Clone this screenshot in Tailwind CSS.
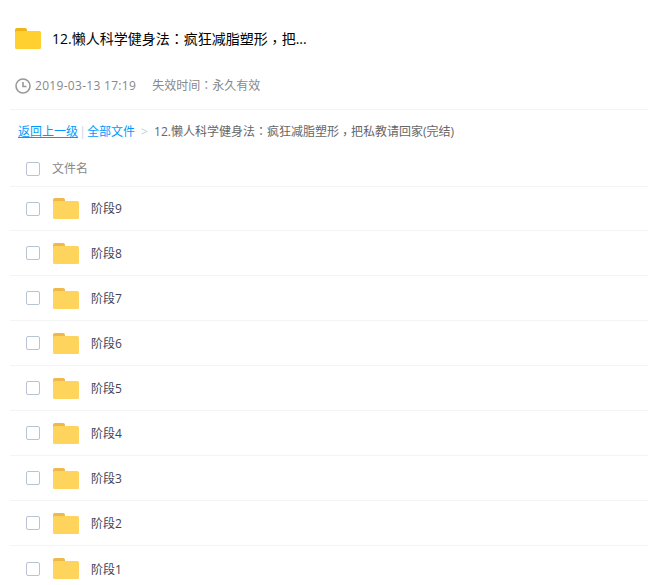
<!DOCTYPE html>
<html lang="zh">
<head>
<meta charset="UTF-8">
<script src="https://cdn.jsdelivr.net/npm/@tailwindcss/browser@4"></script>
<title>文件</title>
</head>
<body class="bg-white h-[585px] overflow-hidden font-['Open_Sans','Noto_Sans_CJK_SC',sans-serif]">
<div class="pl-[10px]">
  <div class="flex items-center h-[38px] mt-[19px] pl-[5px] gap-[11px]">
    <svg width="26" height="21" viewBox="0 0 26 21"><path d="M0 2a2 2 0 0 1 2-2h8a2 2 0 0 1 2 2v3H0z" fill="#f2b318"/><rect y="3" width="26" height="18" rx="1.5" fill="#ffd02f"/></svg>
    <span class="text-sm text-black">12.懒人科学健身法<span lang="zh-TW" class="font-['Noto_Sans_CJK_TC']">：</span>疯狂减脂塑形<span lang="zh-TW" class="relative top-[3px] font-['Noto_Sans_CJK_TC']">，</span>把...</span>
  </div>
  <div class="flex items-center h-[53px] pl-[5px] pt-[5px] text-xs text-[#888] border-b border-[#f3f4f6]">
    <svg width="16" height="16" viewBox="0 0 16 16" fill="none" stroke="#999" stroke-width="1.6"><circle cx="8" cy="8" r="7"/><path d="M8 4v4.5h3.5"/></svg>
    <span class="ml-1 tracking-[0.3px]">2019-03-13 17:19</span>
    <span class="ml-4">失效时间<span lang="zh-TW" class="font-['Noto_Sans_CJK_TC']">：</span>永久有效</span>
  </div>
  <div class="flex items-center h-10 pl-2 pt-[3px] text-xs text-[#666]">
    <span class="text-[#09f] underline">返回上一级</span>
    <span class="w-[9px] text-center text-[#c5d5e5]">|</span>
    <span class="text-[#09f]">全部文件</span>
    <span class="w-[19px] text-center text-[#c5d0e0]">&gt;</span>
    <span>12.懒人科学健身法<span lang="zh-TW" class="font-['Noto_Sans_CJK_TC']">：</span>疯狂减脂塑形<span lang="zh-TW" class="relative top-[3px] font-['Noto_Sans_CJK_TC']">，</span>把私教请回家(完结)</span>
  </div>
  <div class="flex items-center h-[37px] pl-4 pt-[1px] text-xs text-[#888] border-b border-[#f3f4f6]">
    <span class="w-[14px] h-[14px] border border-[#b8c4d4] rounded-[2px]"></span>
    <span class="ml-3 pt-[1px]">文件名</span>
  </div>
  <div id="rows">
    <div class="flex items-center h-[44px] pl-4 border-b border-[#f3f4f6]"><span class="w-[14px] h-[14px] border border-[#b8c4d4] rounded-[2px]"></span><svg class="ml-[13px]" width="26" height="21" viewBox="0 0 26 21"><path d="M0 2a2 2 0 0 1 2-2h8a2 2 0 0 1 2 2v3H0z" fill="#eeb84a"/><rect y="3" width="26" height="18" rx="1.5" fill="#ffd45c"/></svg><span class="ml-3 pt-[1px] text-xs text-[#445]">阶段9</span></div>
    <div class="flex items-center h-[45px] pl-4 border-b border-[#f3f4f6]"><span class="w-[14px] h-[14px] border border-[#b8c4d4] rounded-[2px]"></span><svg class="ml-[13px]" width="26" height="21" viewBox="0 0 26 21"><path d="M0 2a2 2 0 0 1 2-2h8a2 2 0 0 1 2 2v3H0z" fill="#eeb84a"/><rect y="3" width="26" height="18" rx="1.5" fill="#ffd45c"/></svg><span class="ml-3 pt-[2px] text-xs text-[#445]">阶段8</span></div>
    <div class="flex items-center h-[45px] pl-4 border-b border-[#f3f4f6]"><span class="w-[14px] h-[14px] border border-[#b8c4d4] rounded-[2px]"></span><svg class="ml-[13px]" width="26" height="21" viewBox="0 0 26 21"><path d="M0 2a2 2 0 0 1 2-2h8a2 2 0 0 1 2 2v3H0z" fill="#eeb84a"/><rect y="3" width="26" height="18" rx="1.5" fill="#ffd45c"/></svg><span class="ml-3 pt-[2px] text-xs text-[#445]">阶段7</span></div>
    <div class="flex items-center h-[45px] pl-4 border-b border-[#f3f4f6]"><span class="w-[14px] h-[14px] border border-[#b8c4d4] rounded-[2px]"></span><svg class="ml-[13px]" width="26" height="21" viewBox="0 0 26 21"><path d="M0 2a2 2 0 0 1 2-2h8a2 2 0 0 1 2 2v3H0z" fill="#eeb84a"/><rect y="3" width="26" height="18" rx="1.5" fill="#ffd45c"/></svg><span class="ml-3 pt-[2px] text-xs text-[#445]">阶段6</span></div>
    <div class="flex items-center h-[45px] pl-4 border-b border-[#f3f4f6]"><span class="w-[14px] h-[14px] border border-[#b8c4d4] rounded-[2px]"></span><svg class="ml-[13px]" width="26" height="21" viewBox="0 0 26 21"><path d="M0 2a2 2 0 0 1 2-2h8a2 2 0 0 1 2 2v3H0z" fill="#eeb84a"/><rect y="3" width="26" height="18" rx="1.5" fill="#ffd45c"/></svg><span class="ml-3 pt-[2px] text-xs text-[#445]">阶段5</span></div>
    <div class="flex items-center h-[45px] pl-4 border-b border-[#f3f4f6]"><span class="w-[14px] h-[14px] border border-[#b8c4d4] rounded-[2px]"></span><svg class="ml-[13px]" width="26" height="21" viewBox="0 0 26 21"><path d="M0 2a2 2 0 0 1 2-2h8a2 2 0 0 1 2 2v3H0z" fill="#eeb84a"/><rect y="3" width="26" height="18" rx="1.5" fill="#ffd45c"/></svg><span class="ml-3 pt-[2px] text-xs text-[#445]">阶段4</span></div>
    <div class="flex items-center h-[45px] pl-4 border-b border-[#f3f4f6]"><span class="w-[14px] h-[14px] border border-[#b8c4d4] rounded-[2px]"></span><svg class="ml-[13px]" width="26" height="21" viewBox="0 0 26 21"><path d="M0 2a2 2 0 0 1 2-2h8a2 2 0 0 1 2 2v3H0z" fill="#eeb84a"/><rect y="3" width="26" height="18" rx="1.5" fill="#ffd45c"/></svg><span class="ml-3 pt-[2px] text-xs text-[#445]">阶段3</span></div>
    <div class="flex items-center h-[45px] pl-4 border-b border-[#f3f4f6]"><span class="w-[14px] h-[14px] border border-[#b8c4d4] rounded-[2px]"></span><svg class="ml-[13px]" width="26" height="21" viewBox="0 0 26 21"><path d="M0 2a2 2 0 0 1 2-2h8a2 2 0 0 1 2 2v3H0z" fill="#eeb84a"/><rect y="3" width="26" height="18" rx="1.5" fill="#ffd45c"/></svg><span class="ml-3 pt-[2px] text-xs text-[#445]">阶段2</span></div>
    <div class="flex items-center h-[45px] pl-4"><span class="w-[14px] h-[14px] border border-[#b8c4d4] rounded-[2px]"></span><svg class="ml-[13px]" width="26" height="21" viewBox="0 0 26 21"><path d="M0 2a2 2 0 0 1 2-2h8a2 2 0 0 1 2 2v3H0z" fill="#eeb84a"/><rect y="3" width="26" height="18" rx="1.5" fill="#ffd45c"/></svg><span class="ml-3 pt-[2px] text-xs text-[#445]">阶段1</span></div>
  </div>
</div>
</body>
</html>
